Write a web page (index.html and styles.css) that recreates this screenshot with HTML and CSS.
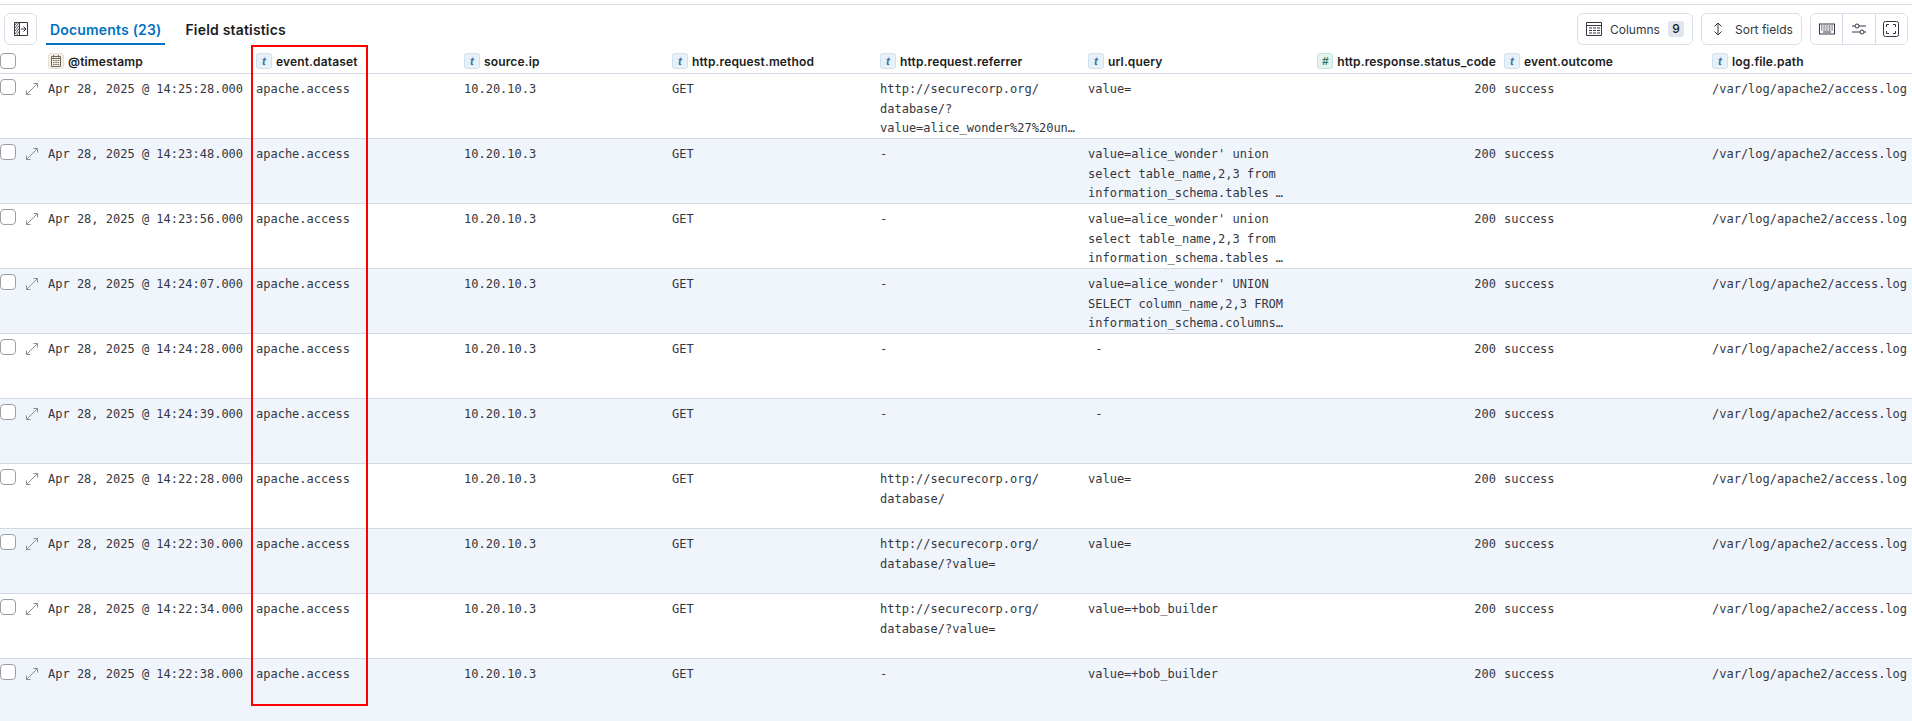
FILE: index.html
```html
<!DOCTYPE html>
<html lang="en">
<head>
<meta charset="utf-8">
<title>Documents</title>
<link rel="stylesheet" href="styles.css">
</head>
<body>
<svg class="defs" width="0" height="0" aria-hidden="true">
  <symbol id="expand" viewBox="0 0 12 12"><path d="M0.500 11.500 11.500 0.500M7.500 0.500h4v4M0.500 7.500v4h4" fill="none" stroke="currentColor" stroke-width="1"/></symbol>
  <symbol id="cal" viewBox="0 0 12 12"><path d="M1.500 1.500h9v10h-9zM1.500 3.500h9M3.500 0v2.500M8.500 0v2.500M3 5.500h1.500M5.300 5.500h1.500M7.600 5.500h1.500M3 7.500h1.500M5.300 7.500h1.500M7.600 7.500h1.500M3 9.500h1.500M5.300 9.500h1.500M7.600 9.500h1.500" fill="none" stroke="currentColor" stroke-width="1"/></symbol>
</svg>
<div class="page">
  <header class="toolbar">
    <button class="btn square" aria-label="Toggle sidebar">
      <svg width="16" height="16" viewBox="0 0 16 16"><path d="M1.500 1.500h13v13h-13z" fill="none" stroke="#343741"/><path d="M2 4l2-2.500M2 7l4-5.500M2 10l4-5.500M2 13l4-5.500M3 15l3-4.500" stroke="#5a5f6a" stroke-width="1"/><path d="M6.500 1v14" stroke="#343741"/><path d="M8 8h5M10.500 5.500 13 8l-2.500 2.500" fill="none" stroke="#343741"/></svg>
    </button>
    <nav class="tabs">
      <span class="tab active">Documents (23)</span>
      <span class="tab">Field statistics</span>
    </nav>
    <div class="actions">
      <button class="btn tool columns">
        <svg width="16" height="16" viewBox="0 0 16 16"><path d="M.5 1.500h15v13H.5zM.5 4.500h15M3 7h3M7 7h3M11 7h3M3 9.500h3M7 9.500h3M11 9.500h3M3 12h3M7 12h3M11 12h3" fill="none" stroke="#343741"/></svg>
        <span>Columns</span><b class="count">9</b>
      </button>
      <button class="btn tool sort">
        <svg width="16" height="16" viewBox="0 0 16 16"><path d="M8 2v12M4.500 5.500 8 2l3.500 3.500M4.500 10.500 8 14l3.500-3.500" fill="none" stroke="#343741"/></svg>
        <span class="nowrap">Sort fields</span>
      </button>
      <div class="group">
        <button class="seg" aria-label="Keyboard shortcuts">
          <svg width="16" height="16" viewBox="0 0 16 16"><rect x=".5" y="3" width="15" height="10" fill="none" stroke="#343741"/><path d="M2 5h12M2 7h12M2 9h12" stroke="#343741" stroke-dasharray="1 .6"/><path d="M4 11h8" stroke="#343741"/></svg>
        </button>
        <button class="seg" aria-label="Display options">
          <svg width="16" height="16" viewBox="0 0 16 16"><path d="M1 5h3M8 5h7M1 11h8M13 11h2" fill="none" stroke="#343741"/><circle cx="6" cy="5" r="2" fill="none" stroke="#343741"/><circle cx="11" cy="11" r="2" fill="none" stroke="#343741"/></svg>
        </button>
        <button class="seg" aria-label="Full screen">
          <svg width="16" height="16" viewBox="0 0 16 16"><rect x=".5" y=".5" width="15" height="15" rx="2" fill="none" stroke="#343741"/><path d="M3.500 6V3.500h2.500M10 3.500h2.500V6M12.500 10v2.500H10M6 12.500H3.500V10" fill="none" stroke="#343741"/></svg>
        </button>
      </div>
    </div>
  </header>

  <div class="row head">
    <div class="ctl"><span class="check"></span></div>
    <div class="th"><i class="type date"><svg width="12" height="12"><use href="#cal"/></svg></i>@timestamp</div>
    <div class="th"><i class="type text">t</i>event.dataset</div>
    <div class="th"><i class="type text">t</i>source.ip</div>
    <div class="th"><i class="type text">t</i>http.request.method</div>
    <div class="th"><i class="type text">t</i>http.request.referrer</div>
    <div class="th"><i class="type text">t</i>url.query</div>
    <div class="th num"><i class="type number">#</i>http.response.status_code</div>
    <div class="th"><i class="type text">t</i>event.outcome</div>
    <div class="th"><i class="type text">t</i>log.file.path</div>
  </div>

  <div class="row">
    <div class="ctl"><span class="check"></span><svg class="exp" width="12" height="12"><use href="#expand"/></svg></div>
    <div class="td">Apr 28, 2025 @ 14:25:28.000</div><div class="td">apache.access</div><div class="td">10.20.10.3</div><div class="td">GET</div>
    <div class="td">http://securecorp.org/<br>database/?<br>value=alice_wonder%27%20un…</div>
    <div class="td">value=</div>
    <div class="td r">200</div><div class="td">success</div><div class="td">/var/log/apache2/access.log</div>
  </div>
  <div class="row alt">
    <div class="ctl"><span class="check"></span><svg class="exp" width="12" height="12"><use href="#expand"/></svg></div>
    <div class="td">Apr 28, 2025 @ 14:23:48.000</div><div class="td">apache.access</div><div class="td">10.20.10.3</div><div class="td">GET</div>
    <div class="td">-</div>
    <div class="td">value=alice_wonder' union<br>select table_name,2,3 from<br>information_schema.tables …</div>
    <div class="td r">200</div><div class="td">success</div><div class="td">/var/log/apache2/access.log</div>
  </div>
  <div class="row">
    <div class="ctl"><span class="check"></span><svg class="exp" width="12" height="12"><use href="#expand"/></svg></div>
    <div class="td">Apr 28, 2025 @ 14:23:56.000</div><div class="td">apache.access</div><div class="td">10.20.10.3</div><div class="td">GET</div>
    <div class="td">-</div>
    <div class="td">value=alice_wonder' union<br>select table_name,2,3 from<br>information_schema.tables …</div>
    <div class="td r">200</div><div class="td">success</div><div class="td">/var/log/apache2/access.log</div>
  </div>
  <div class="row alt">
    <div class="ctl"><span class="check"></span><svg class="exp" width="12" height="12"><use href="#expand"/></svg></div>
    <div class="td">Apr 28, 2025 @ 14:24:07.000</div><div class="td">apache.access</div><div class="td">10.20.10.3</div><div class="td">GET</div>
    <div class="td">-</div>
    <div class="td">value=alice_wonder' UNION<br>SELECT column_name,2,3 FROM<br>information_schema.columns…</div>
    <div class="td r">200</div><div class="td">success</div><div class="td">/var/log/apache2/access.log</div>
  </div>
  <div class="row">
    <div class="ctl"><span class="check"></span><svg class="exp" width="12" height="12"><use href="#expand"/></svg></div>
    <div class="td">Apr 28, 2025 @ 14:24:28.000</div><div class="td">apache.access</div><div class="td">10.20.10.3</div><div class="td">GET</div>
    <div class="td">-</div>
    <div class="td">&nbsp;-</div>
    <div class="td r">200</div><div class="td">success</div><div class="td">/var/log/apache2/access.log</div>
  </div>
  <div class="row alt">
    <div class="ctl"><span class="check"></span><svg class="exp" width="12" height="12"><use href="#expand"/></svg></div>
    <div class="td">Apr 28, 2025 @ 14:24:39.000</div><div class="td">apache.access</div><div class="td">10.20.10.3</div><div class="td">GET</div>
    <div class="td">-</div>
    <div class="td">&nbsp;-</div>
    <div class="td r">200</div><div class="td">success</div><div class="td">/var/log/apache2/access.log</div>
  </div>
  <div class="row">
    <div class="ctl"><span class="check"></span><svg class="exp" width="12" height="12"><use href="#expand"/></svg></div>
    <div class="td">Apr 28, 2025 @ 14:22:28.000</div><div class="td">apache.access</div><div class="td">10.20.10.3</div><div class="td">GET</div>
    <div class="td">http://securecorp.org/<br>database/</div>
    <div class="td">value=</div>
    <div class="td r">200</div><div class="td">success</div><div class="td">/var/log/apache2/access.log</div>
  </div>
  <div class="row alt">
    <div class="ctl"><span class="check"></span><svg class="exp" width="12" height="12"><use href="#expand"/></svg></div>
    <div class="td">Apr 28, 2025 @ 14:22:30.000</div><div class="td">apache.access</div><div class="td">10.20.10.3</div><div class="td">GET</div>
    <div class="td">http://securecorp.org/<br>database/?value=</div>
    <div class="td">value=</div>
    <div class="td r">200</div><div class="td">success</div><div class="td">/var/log/apache2/access.log</div>
  </div>
  <div class="row">
    <div class="ctl"><span class="check"></span><svg class="exp" width="12" height="12"><use href="#expand"/></svg></div>
    <div class="td">Apr 28, 2025 @ 14:22:34.000</div><div class="td">apache.access</div><div class="td">10.20.10.3</div><div class="td">GET</div>
    <div class="td">http://securecorp.org/<br>database/?value=</div>
    <div class="td">value=+bob_builder</div>
    <div class="td r">200</div><div class="td">success</div><div class="td">/var/log/apache2/access.log</div>
  </div>
  <div class="row alt">
    <div class="ctl"><span class="check"></span><svg class="exp" width="12" height="12"><use href="#expand"/></svg></div>
    <div class="td">Apr 28, 2025 @ 14:22:38.000</div><div class="td">apache.access</div><div class="td">10.20.10.3</div><div class="td">GET</div>
    <div class="td">-</div>
    <div class="td">value=+bob_builder</div>
    <div class="td r">200</div><div class="td">success</div><div class="td">/var/log/apache2/access.log</div>
  </div>

  <div class="highlight"></div>
</div>
</body>
</html>
```

FILE: styles.css
```css
* { box-sizing: border-box; }
html, body { margin: 0; height: 100%; overflow: hidden; background: #fff; }
body { font-family: Inter, "Liberation Sans", sans-serif; color: #343741; }
.defs { position: absolute; }
.page { position: relative; width: 1912px; height: 717px; overflow: hidden; border-top: 1px solid #d3dae6; margin-top: 4px; }

.toolbar { display: flex; align-items: flex-end; height: 40px; padding: 0 4px; }
.btn { display: flex; align-items: center; height: 32px; background: #fff; border: 1px solid #d9e0ea; border-radius: 6px; padding: 0; font: 400 12px Inter, sans-serif; color: #343741; }
.btn svg { flex: none; }
.nowrap { white-space: nowrap; }
.square { width: 33px; justify-content: center; }
.tabs { display: flex; gap: 16px; margin-left: 9px; height: 32px; }
.tab { padding: 0 4px; font-size: 14px; font-weight: 600; letter-spacing: .18px; line-height: 34px; height: 32px; color: #1a1c21; }
.tab.active { color: #0071c2; border-bottom: 2px solid #0071c2; }
.actions { display: flex; gap: 8px; margin-left: auto; }
.tool { gap: 8px; padding: 0 8px; }
.columns { width: 116px; }
.sort { width: 101px; gap: 9px; }
.count { display: block; width: 16px; height: 16px; border-radius: 3px; background: #e0e5ee; font-size: 12px; font-weight: 500; line-height: 16px; text-align: center; color: #1a1c21; }
.group { display: flex; width: 98px; height: 32px; border: 1px solid #d9e0ea; border-radius: 6px; overflow: hidden; }
.seg { flex: 1; display: flex; align-items: center; justify-content: center; padding: 0; background: #fff; border: 0; border-left: 1px solid #d3dae6; }
.seg:first-child { border-left: 0; }

.row { display: grid; grid-template-columns: 48px repeat(8, 208px) 200px; height: 65px; border-bottom: 1px solid #d3dae6; font: 12px/19.5px "DejaVu Sans Mono", monospace; color: #343741; }
.row.alt { background: #f0f4fb; }
.row.head { height: 29px; border-bottom: 1px solid #d3dae6; font: 600 12px/18px Inter, sans-serif; letter-spacing: .15px; color: #1a1c21; }
.ctl { display: flex; align-items: flex-start; gap: 10px; padding-top: 5px; color: #8a8f98; }
.head .ctl { padding-top: 8px; }
.check { display: block; width: 16px; height: 16px; background: #fff; border: 1px solid #9a9ea6; border-radius: 4px; }
.exp { margin-top: 4px; }
.th { display: flex; align-items: flex-start; gap: 4px; padding-top: 8px; height: 28px; white-space: nowrap; }
.th.num { justify-content: flex-end; padding-right: 8px; margin-left: 22px; }
.type { flex: none; display: flex; align-items: center; justify-content: center; width: 16px; height: 16px; border-radius: 3px; border: 1px solid; font: italic 700 11.500px/14px "Liberation Sans", sans-serif; letter-spacing: 0; }
.type.text { background: #e6f1fa; border-color: #cfe2f1; color: #3f6f94; }
.type.date { background: #f3eee4; border-color: #e8e0d2; color: #6f6a5c; font-style: normal; }
.type.number { background: #e3f3ef; border-color: #c6e5dd; color: #1f6f5c; }
.td { padding: 6px 8px 0 0; white-space: nowrap; }
.td.r { text-align: right; }

.highlight { position: absolute; left: 251px; top: 40px; width: 117px; height: 661px; border: 2px solid #f00; }
```
